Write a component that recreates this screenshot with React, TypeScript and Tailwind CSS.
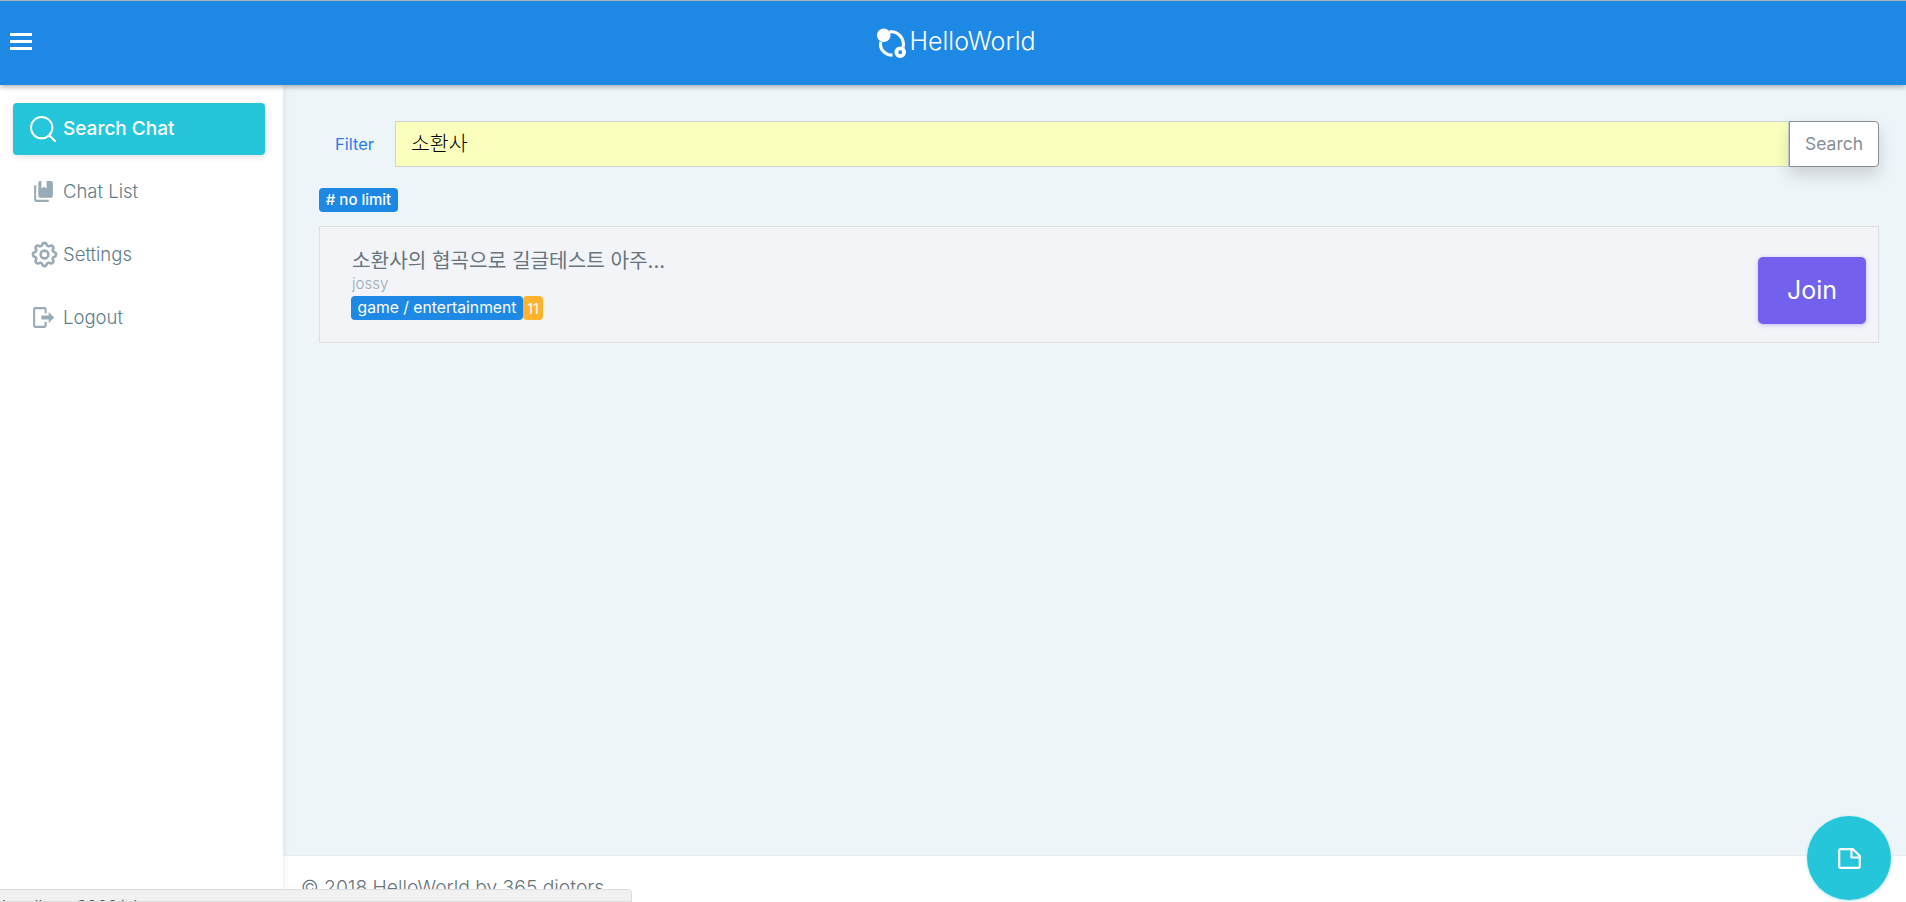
import React from 'react';
import { Search } from 'lucide-react';
import { HiOutlineCog } from 'react-icons/hi';

const font = "font-['Inter','Noto_Sans_CJK_KR',sans-serif]";

const Logo = () => (
  <svg width="31" height="31" viewBox="0 0 32 32" fill="none">
    <path d="M5 14 C3 21 9 28 17 28" stroke="white" strokeWidth="3.2" />
    <path d="M14 4 C22 3 30 10 28 20" stroke="white" strokeWidth="3.2" />
    <circle cx="8" cy="7.5" r="7" fill="white" />
    <circle cx="25" cy="25" r="4" fill="#1e88e5" stroke="white" strokeWidth="4" />
  </svg>
);

const MenuIcon = () => (
  <svg width="22" height="17" viewBox="0 0 22 17" fill="white">
    <rect x="0" y="0" width="22" height="3" />
    <rect x="0" y="7" width="22" height="3" />
    <rect x="0" y="14" width="22" height="3" />
  </svg>
);

const FileIcon = () => (
  <svg width="23" height="21" viewBox="0 0 23 21" fill="none" stroke="white" strokeWidth="2.2" strokeLinejoin="round">
    <path d="M2.5 1.2 H15 L21.8 8 V18 Q21.8 19.8 20 19.8 H2.5 Q1.2 19.8 1.2 18 V3 Q1.2 1.2 2.5 1.2 Z" />
    <path d="M13.5 1.2 V9.5 H21.8" />
  </svg>
);

const BookIcon = () => (
  <svg width="25" height="25" viewBox="0 0 24 24" fill="currentColor">
    <path d="M19 18H9C7.89 18 7 17.1 7 16V4C7 2.89 7.89 2 9 2H10V9L12.5 7.5L15 9V2H19C20.1 2 21 2.9 21 4V16C21 17.1 20.1 18 19 18M5 20H17V22H5C3.9 22 3 21.1 3 20V6H5V20Z" />
  </svg>
);

const LogoutIcon = () => (
  <svg width="25" height="25" viewBox="0 0 24 24" fill="currentColor">
    <path d="M17,17.25V14H10V10H17V6.75L22.25,12L17,17.25M13,2A2,2 0 0,1 15,4V8H13V4H4V20H13V16H15V20A2,2 0 0,1 13,22H4A2,2 0 0,1 2,20V4A2,2 0 0,1 4,2H13Z" />
  </svg>
);

const items = [
  { label: 'Chat List', icon: <BookIcon /> },
  { label: 'Settings', icon: <HiOutlineCog size={31} className="-ml-[2px] shrink-0" /> },
  { label: 'Logout', icon: <LogoutIcon /> },
];

const App: React.FC = () => {
  return (
    <div className={`${font} relative h-[902px] overflow-hidden flex flex-col bg-[#eef5f9]`}>
      <header className="relative z-20 h-[85px] shrink-0 border-t border-t-[#aab2ba] bg-[#1e88e5] shadow-[0_2px_5px_rgba(0,0,0,0.3)] flex items-center">
        <div className="absolute left-[10px] top-[32px] flex">
          <MenuIcon />
        </div>
        <div className="mx-auto flex items-center pl-[6px]">
          <Logo />
          <span className="ml-[2px] text-[25px] font-light text-white leading-none -translate-y-[2px]">HelloWorld</span>
        </div>
      </header>

      <div className="flex flex-1 min-h-0">
        <aside className="w-[283px] shrink-0 bg-white shadow-[1px_0_6px_rgba(0,0,0,0.08)] z-10 pl-[13px] pr-[18px] pt-[18px]">
          <div className="h-[52px] rounded-[4px] bg-[#26c6da] shadow-[0_2px_6px_rgba(0,0,0,0.12)] flex items-center pl-[14px] gap-[4px] text-white font-medium text-[19px]">
            <Search size={32} strokeWidth={1.5} />
            Search Chat
          </div>
          <nav className="mt-[5px] flex flex-col">
            {items.map((it) => (
              <div key={it.label} className="h-[63px] flex items-center pl-[18px] text-[#607d8b] text-[18.5px] font-light">
                <span className="w-[32px] flex justify-start text-[#99abb4]">{it.icon}</span>
                {it.label}
              </div>
            ))}
          </nav>
        </aside>

        <div className="flex-1 min-w-0 flex flex-col">
          <main className="flex-1 pl-[36px] pr-[27px] pt-[36px]">
            <div className="flex h-[46px] items-center">
              <span className="w-[76px] pl-[16px] text-[#2b7de9] text-[16.5px]">Filter</span>
              <div className="flex-1 h-full bg-[#faffbd] border border-[#ced4da] flex items-center pl-[15px] text-[20.5px] font-light text-black">
                소환사
              </div>
              <button className="w-[90px] h-full bg-white border border-[#868e96] rounded-r-[4px] text-[#868e96] text-[17.5px] shadow-[0_8px_16px_rgba(0,0,0,0.15)]">
                Search
              </button>
            </div>

            <div className="mt-[21px] flex">
              <span className="h-[24px] w-[79px] justify-center rounded-[4px] bg-[#1e88e5] text-white text-[15px] font-medium flex items-center">
                # no limit
              </span>
            </div>

            <div className="mt-[14px] h-[117px] border border-[#dedede] bg-[#f2f4f8] flex items-center justify-between pl-[31px] pr-[12px]">
              <div className="pt-[1px]">
                <div className="pl-[1px] text-[20.2px] leading-[25px] text-[#67757c] -translate-y-[2px]">소환사의 협곡으로 길글테스트 아주...</div>
                <div className="pl-[1px] text-[15px] leading-[19px] text-[#99abb4] font-light -translate-y-[1px]">jossy</div>
                <div className="mt-[2px] flex">
                  <span className="h-[24px] w-[172px] justify-center rounded-[4px] bg-[#1e88e5] text-white text-[15.7px] flex items-center">game / entertainment</span>
                  <span className="h-[24px] w-[20px] justify-center rounded-[4px] bg-[#ffb22b] text-white text-[14px] flex items-center">11</span>
                </div>
              </div>
              <button className="mt-[12px] w-[108px] h-[67px] rounded-[5px] bg-[#7460ee] text-white text-[25px] shadow-[0_1px_4px_rgba(116,96,238,0.4)]">
                Join
              </button>
            </div>
          </main>

          <footer className="h-[47px] shrink-0 bg-white border-t border-t-[#e9eef1] pl-[18px] pt-[19px] text-[#67757c] text-[19.3px] font-light leading-[24px]">
            © 2018 HelloWorld by 365 diotors
          </footer>
        </div>
      </div>

      <div className="absolute left-[-2px] bottom-0 w-[634px] h-[13px] bg-[#f1f1f1] border border-[#dcdcdc] rounded-tr-[4px] z-20 text-[16.4px] leading-[16px] text-[#555] pl-[3px] pt-[8px] overflow-hidden">
        localhost:3000/chat
      </div>

      <button className="absolute left-[1807px] top-[816px] z-30 w-[84px] h-[84px] rounded-full bg-[#26c6da] flex items-center justify-center shadow-[0_1px_3px_rgba(38,198,218,0.4)]">
        <FileIcon />
      </button>
    </div>
  );
};

export default App;
